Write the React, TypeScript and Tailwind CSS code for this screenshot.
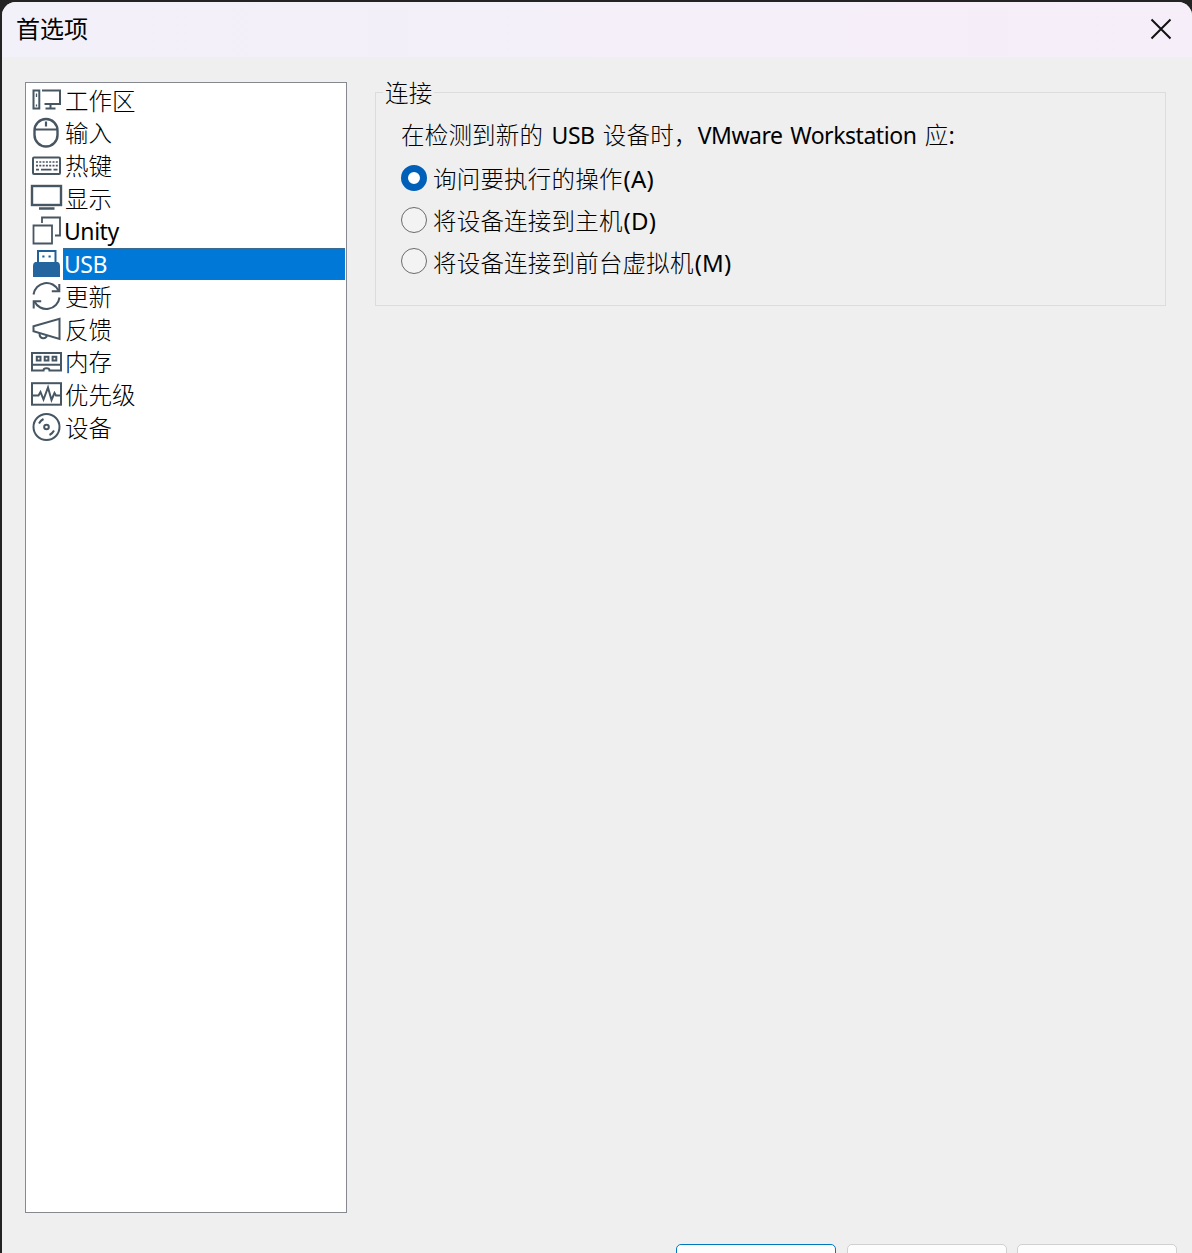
import type { ReactNode } from "react";

const TEXT = "font-['Noto_Sans','Noto_Sans_CJK_SC',sans-serif]";

// Latin runs are heavier and a little tighter than the Chinese text around them
function Latin({ children }: { children: ReactNode }) {
    return <span className="font-['Noto_Sans',sans-serif] text-[23px] font-normal tracking-[-0.450px]">{children}</span>;
}

const items: { label: string; latin?: boolean; selected?: boolean; icon: ReactNode }[] = [
    {
        label: "工作区",
        icon: (
            <>
                <path d="M3.500 6.500h5.800v18H3.500z" />
                <path d="M6.500 9.500v3.500M6.500 20.500v2" strokeWidth="1.300" />
                <path d="M12 6.500h18v13.500H14.500M20.500 20v4M15.500 24.500h10" />
            </>
        ),
    },
    {
        label: "输入",
        icon: (
            <>
                <rect x="4.500" y="2" width="23" height="27.500" rx="11.500" strokeWidth="2.400" />
                <path d="M4.500 12.500h23M16 4.500v5" strokeWidth="2.200" />
            </>
        ),
    },
    {
        label: "热键",
        icon: (
            <>
                <rect x="3" y="7.500" width="27" height="16.500" rx="1" />
                <path d="M6 12h22M6 15.700h22" strokeDasharray="2 1.300" strokeWidth="1.700" />
                <path d="M6 19.700h3M11 19.700h10.500M23.500 19.700h4" strokeWidth="1.700" />
            </>
        ),
    },
    {
        label: "显示",
        icon: (
            <>
                <rect x="2" y="4" width="29" height="19" strokeWidth="2.400" />
                <path d="M9 26.500h15.500" strokeWidth="2.400" />
            </>
        ),
    },
    {
        label: "Unity",
        latin: true,
        icon: (
            <>
                <path d="M3.500 10.500h18.500v18H3.500z" strokeWidth="1.800" />
                <path d="M12 8V2.500h18V20.500h-5" strokeWidth="1.800" />
            </>
        ),
    },
    {
        label: "USB",
        latin: true,
        selected: true,
        icon: (
            <>
                <path d="M8 15V3h17.500v12" stroke="#215f98" />
                <path d="M3 29V17.500q0-2.500 2-3.500h23q2 1 2 3.500v11.500z" fill="#24649f" stroke="none" />
                <path d="M12.300 8.500h2.200M18.500 8.500h2.200" stroke="#215f98" />
            </>
        ),
    },
    {
        label: "更新",
        icon: (
            <>
                <path d="M3.500 14.500A13.200 13.200 0 0 1 28.500 10.500M29.500 17.500A13.200 13.200 0 0 1 4.500 21.500" />
                <path d="M29.300 4v7.300h-7.500M3.700 28.500v-7.300h7.500" />
            </>
        ),
    },
    {
        label: "反馈",
        icon: (
            <>
                <path d="M3.500 13.200L29.500 5.800V26L3.500 18.200z" />
                <path d="M9.500 20.200c0 6.500 6.500 6 7.500 2" />
            </>
        ),
    },
    {
        label: "内存",
        icon: (
            <>
                <path d="M2 7h29v17.500H19.500c0-3-6-3-6 0H2zM2 18.800h29" />
                <path d="M6.800 10.800h3.700v3.700H6.800zM14.700 10.800h3.700v3.700h-3.700zM22.600 10.800h3.700v3.700h-3.700z" />
            </>
        ),
    },
    {
        label: "优先级",
        icon: (
            <>
                <rect x="2" y="4.200" width="29" height="21.500" />
                <path d="M2 16.500h6.500l2-3.500 3 7.500 4.500-12 3.500 12.500 3-7 1.500 2.500h5" />
            </>
        ),
    },
    {
        label: "设备",
        icon: (
            <>
                <circle cx="16.500" cy="16" r="13" />
                <circle cx="16.500" cy="16" r="2.300" />
                <path d="M9 12.500q1.500-3 4.500-4.500M24 19.500q-1.500 3-4.500 4.500" />
            </>
        ),
    },
];

function Sidebar() {
    return (
        <ul className="h-[1131px] w-[322px] shrink-0 border border-[#868990] bg-white pt-[1px] pr-[1px] pl-1">
            {items.map((item) => (
                <li key={item.label} className="flex h-[32.700px] items-center">
                    <svg
                        className="h-8 w-8 shrink-0 overflow-visible"
                        viewBox="0 0 32 32"
                        fill="none"
                        stroke="#465663"
                        strokeWidth="2"
                    >
                        {item.icon}
                    </svg>
                    <span
                        className={
                            item.selected
                                ? "ml-px flex h-8 flex-1 items-center bg-[#0078d7] pt-px pl-px text-white outline-1 -outline-offset-1 outline-dotted outline-[#3b6d94]"
                                : item.latin
                                  ? "ml-px flex h-8 flex-1 items-center pt-px pl-px"
                                  : "ml-px flex h-8 flex-1 items-center pt-0.5 pl-0.5"
                        }
                    >
                        {item.latin ? <Latin>{item.label}</Latin> : item.label}
                    </span>
                </li>
            ))}
        </ul>
    );
}

const options = [
    { label: "询问要执行的操作", shortcut: "(A)", checked: true },
    { label: "将设备连接到主机", shortcut: "(D)", checked: false },
    { label: "将设备连接到前台虚拟机", shortcut: "(M)", checked: false },
];

function ConnectionGroup() {
    return (
        <fieldset className="mt-[-4px] ml-7 h-[228px] w-[791px] border border-[#dcdcdc] pl-[25px] tracking-[0.200px]">
            <legend className="-ml-[18px] h-7 px-0.5 leading-[30px]">连接</legend>
            <p className="mt-[13px] h-8 leading-8 whitespace-nowrap [word-spacing:2px]">
                在检测到新的 <Latin>USB</Latin> 设备时，<Latin>VMware Workstation</Latin> 应
                <span className="font-normal">:</span>
            </p>
            <div className="mt-[6px] flex flex-col">
                {options.map((o) => (
                    <label key={o.shortcut} className="flex h-[41.700px] items-center gap-[6px] whitespace-nowrap">
                        <span
                            className={
                                o.checked
                                    ? "size-[26px] shrink-0 rounded-full border-[7.500px] border-[#005fb8] bg-white"
                                    : "size-[26px] shrink-0 rounded-full border-[1.500px] border-[#6b6b6b] bg-[#f3f3f3]"
                            }
                        />
                        <span className="pt-[3px]">
                            {o.label}
                            <span className="pl-px text-[24px] font-normal">{o.shortcut}</span>
                        </span>
                    </label>
                ))}
            </div>
        </fieldset>
    );
}

export default function App() {
    return (
        <div className={`h-[1253px] w-[1192px] overflow-hidden bg-[#242323] pt-0.5 pl-0.5 text-black ${TEXT}`}>
            <div className="flex h-full flex-col overflow-hidden rounded-t-[14px] bg-[#efefef]">
                <header className="flex h-[55px] shrink-0 items-center justify-between bg-linear-to-r from-[#f2f0f8] to-[#f6eef9] pr-5 pb-[2px] pl-[14px]">
                    <h1 className="-mt-px font-['Noto_Sans_CJK_SC',sans-serif] text-2xl leading-8">首选项</h1>
                    <svg className="size-[22px]" viewBox="0 0 22 22" stroke="#111" strokeWidth="2">
                        <path d="M1.500 1.500l19 19M20.500 1.500l-19 19" />
                    </svg>
                </header>
                <main className="flex h-[1157px] shrink-0 items-start pt-[25px] pl-[23px] text-[23.500px] font-light">
                    <Sidebar />
                    <ConnectionGroup />
                </main>
                <footer className="flex shrink-0 justify-end gap-[10.500px] pt-[30px] pr-[15px]">
                    <button className="h-10 w-[160px] rounded-[5px] border border-[#0078bd] bg-[#fdfdfd]" />
                    <button className="h-10 w-[160px] rounded-[5px] border border-[#d0d0d0] bg-[#fdfdfd]" />
                    <button className="h-10 w-[160px] rounded-[5px] border border-[#d0d0d0] bg-[#fdfdfd]" />
                </footer>
            </div>
        </div>
    );
}
